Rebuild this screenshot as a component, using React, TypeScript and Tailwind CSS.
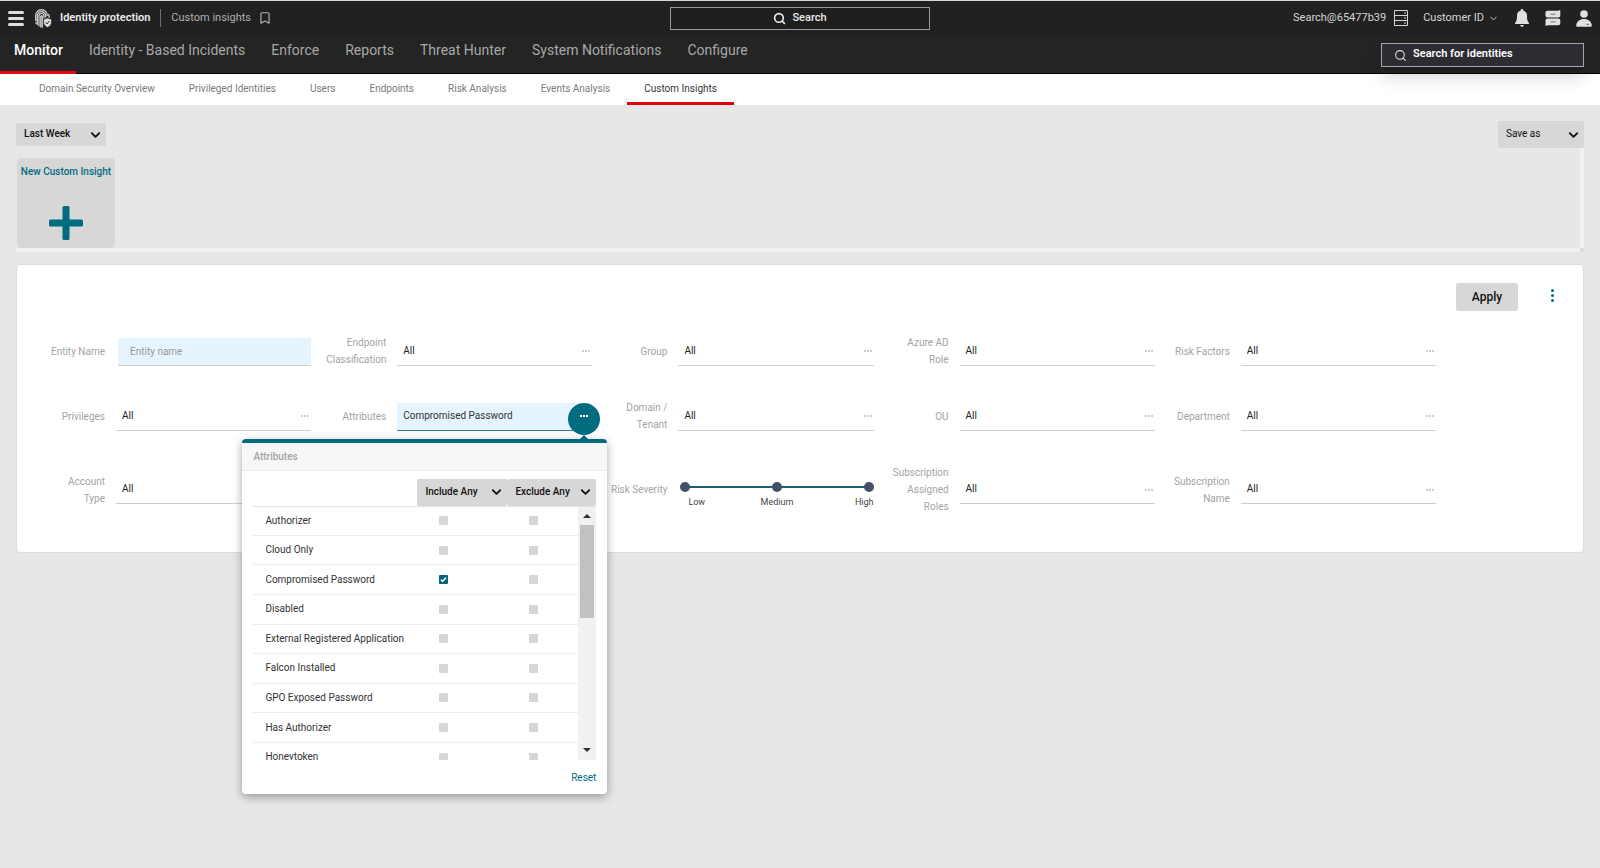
import { useState } from "react";
import type { ReactNode } from "react";
import { Bookmark, ChevronDown, Search } from "lucide-react";

const mainNav = [
  "Monitor",
  "Identity - Based Incidents",
  "Enforce",
  "Reports",
  "Threat Hunter",
  "System Notifications",
  "Configure",
];

const subNav = [
  "Domain Security Overview",
  "Privileged Identities",
  "Users",
  "Endpoints",
  "Risk Analysis",
  "Events Analysis",
  "Custom Insights",
];

const attributes = [
  "Authorizer",
  "Cloud Only",
  "Compromised Password",
  "Disabled",
  "External Registered Application",
  "Falcon Installed",
  "GPO Exposed Password",
  "Has Authorizer",
  "Honeytoken",
];

function FingerprintLogo() {
  return (
    <svg width="17" height="19" viewBox="0 0 17 19" fill="none" stroke="#dcdcdc" strokeWidth="1.2" strokeLinecap="round">
      <path d="M.7 11.500V6.500a5.800 5.800 0 0 1 11.600 0M2.300 15.500V6.800a4.200 4.200 0 0 1 8.400 0V8" />
      <path d="M4 17V7a2.500 2.500 0 0 1 5 0v2M5.800 18V7.300a.8.8 0 0 1 1.500 0v10.900M1 13.500v1" />
      <path d="M13.600 5.500c.5 1 .6 2 .6 3" />
      <path d="M12.500 8.800c1.300.8 2.500 1.200 4.100 1.200v3c0 2.600-1.600 4.500-4.100 5.500-2.500-1-4.100-2.900-4.100-5.500v-3c1.600 0 2.800-.4 4.100-1.200z" fill="#dcdcdc" stroke="#212121" strokeWidth="0.800" />
      <path d="m10.800 13.700 1.200 1.300 2.200-2.700" stroke="#333" strokeWidth="1" />
    </svg>
  );
}

function ServerIcon() {
  return (
    <svg width="14" height="16" viewBox="0 0 14 16" fill="none" stroke="#d6d6d6">
      <path d="M.5.5h13v15H.5zM.5 5.500h13M.5 10.500h13" />
      <path d="M10 3h2M10 8h2M10 13h2" />
    </svg>
  );
}

function BellIcon() {
  return (
    <svg width="14" height="18" viewBox="0 0 14 18" fill="#e0e0e0">
      <path d="M7 0c.8 0 1.300.5 1.300 1.300v.5c2.300.5 3.700 2.200 3.700 4.500 0 4 .3 6 1.800 7.400.4.400.2 1.300-.4 1.300H.6c-.6 0-.8-.9-.4-1.300C1.700 12.300 2 10.300 2 6.300c0-2.300 1.400-4 3.700-4.500v-.5C5.700.5 6.200 0 7 0zM5.200 16h3.600c0 1.100-.8 1.800-1.800 1.800S5.200 17.100 5.200 16z" />
    </svg>
  );
}

function MessagesIcon() {
  return (
    <svg width="16" height="16" viewBox="0 0 16 16">
      <path d="M2.500.800H13L15.300 0v5.500c0 1.100-.9 2-2 2H2.500c-1.100 0-2-.9-2-2V2.800c0-1.100.9-2 2-2z" fill="#e0e0e0" />
      <path d="M2.500 8.500h10.800c1.100 0 2 .9 2 2v2.700c0 1.100-.9 2-2 2H3L.5 16v-5.500c0-1.100.9-2 2-2z" fill="#e0e0e0" />
      <path d="M5.500 4.200h5M5.500 11.800h5" stroke="#777" strokeWidth="1" />
    </svg>
  );
}

function UserIcon() {
  return (
    <svg width="16" height="17" viewBox="0 0 16 17" fill="#e0e0e0">
      <circle cx="8" cy="4" r="3.800" />
      <path d="M8 9c4.300 0 7.200 2.400 7.800 6.200.1.900-.4 1.500-1.300 1.500h-13c-.9 0-1.400-.6-1.300-1.500C.8 11.400 3.700 9 8 9z" />
      <path d="M10.500 14.300h2.500" stroke="#555" />
    </svg>
  );
}

function Dots({ className }: { className: string }) {
  return (
    <svg width="8" height="2" viewBox="0 0 8 2" fill="currentColor" className={className}>
      <path d="M0 0h2v2H0zM3 0h2v2H3zM6 0h2v2H6z" />
    </svg>
  );
}

function Dropdown({ label, value, className }: { label: string; value: string; className: string }) {
  return (
    <div className="relative">
      <select
        aria-label={label}
        className={`block appearance-none rounded-xs bg-[#d7d7d7] pb-[2px] pl-2 text-[10px] text-[#111] outline-none ${className}`}
      >
        <option>{value}</option>
      </select>
      <ChevronDown size={15} strokeWidth={3} className="pointer-events-none absolute right-[3px] top-1/2 -translate-y-1/2 text-[#111]" />
    </div>
  );
}

function Cell({ label, htmlFor, children }: { label: string; htmlFor: string; children: ReactNode }) {
  return (
    <div className="flex min-w-0 items-center">
      <div className="flex w-[86px] flex-none justify-end pb-px pr-[11px]">
        <label htmlFor={htmlFor} className="w-[60px] text-right text-[10px] leading-[17px] text-[#a3a3a3]">
          {label}
        </label>
      </div>
      <div className="min-w-0 flex-1">{children}</div>
    </div>
  );
}

function PickerField({ label }: { label: string }) {
  const id = label.toLowerCase().replace(/[^a-z]+/g, "-");
  return (
    <Cell label={label} htmlFor={id}>
      <button
        id={id}
        className="flex h-7 w-full items-center justify-between border-b border-[#cfcfcf] pl-[6px] pr-[2px] text-[10px] text-[#222]"
      >
        <span className="pb-[2px]">All</span>
        <Dots className="text-[#cdcdcd]" />
      </button>
    </Cell>
  );
}

function Check({ label, checked, onChange }: { label: string; checked: boolean; onChange: () => void }) {
  return (
    <span className="relative block size-[9px]">
      <input
        type="checkbox"
        aria-label={label}
        checked={checked}
        onChange={onChange}
        className="block size-[9px] appearance-none rounded-[1px] bg-[#d6d6d6] checked:bg-[#006679]"
      />
      {checked && (
        <svg viewBox="0 0 9 9" fill="none" stroke="white" strokeWidth="1.500" className="pointer-events-none absolute inset-0">
          <path d="m2 4.700 1.700 1.600L7 2.700" />
        </svg>
      )}
    </span>
  );
}

function AttributesPopup() {
  const [included, setIncluded] = useState<string[]>(["Compromised Password"]);
  const [excluded, setExcluded] = useState<string[]>([]);

  const toggle = (list: string[], name: string) =>
    list.includes(name) ? list.filter((n) => n !== name) : [...list, name];

  return (
    <div className="absolute -right-[15px] top-9 z-20 w-[365px] rounded border-t-4 border-[#006c80] bg-white shadow-[0_3px_10px_rgba(0,0,0,0.35)]">
      <h2 className="flex h-7 items-center border-b border-[#ebebeb] bg-[#f7f7f7] pl-[11px] text-[10px] font-medium text-[#a3a3a3]">
        Attributes
      </h2>
      <div className="px-[11px] pt-2">
        <div className="flex justify-end border-b border-[#e3e3e3]">
          <Dropdown label="Include mode" value="Include Any" className="h-[27px] w-[90px] font-medium" />
          <Dropdown label="Exclude mode" value="Exclude Any" className="h-[27px] w-[89px] font-medium" />
        </div>
        <div className="flex h-[253px] overflow-hidden">
          <div className="flex-1">
            <table className="h-[266px] w-full table-fixed text-[10px] text-[#333]">
              <tbody>
                {attributes.map((name) => (
                  <tr key={name} className="border-b border-[#ececec]">
                    <td className="pb-px pl-3">{name}</td>
                    <td className="w-[90px]">
                      <Check
                        label={`Include ${name}`}
                        checked={included.includes(name)}
                        onChange={() => setIncluded(toggle(included, name))}
                      />
                    </td>
                    <td className="w-[49px]">
                      <Check
                        label={`Exclude ${name}`}
                        checked={excluded.includes(name)}
                        onChange={() => setExcluded(toggle(excluded, name))}
                      />
                    </td>
                  </tr>
                ))}
              </tbody>
            </table>
          </div>
          {/* list scrollbar */}
          <div className="flex w-[18px] flex-none flex-col items-center justify-between bg-[#f1f1f1] pb-2">
            <div className="flex flex-col items-center">
              <svg width="8" height="4" viewBox="0 0 8 4" fill="#333" className="my-[7px]">
                <path d="M4 0 8 4H0z" />
              </svg>
              <div className="h-[93px] w-[14px] bg-[#c1c1c1]" />
            </div>
            <svg width="8" height="4" viewBox="0 0 8 4" fill="#333">
              <path d="M4 4 0 0h8z" />
            </svg>
          </div>
        </div>
        <div className="flex h-[34px] items-center justify-end pt-[2px]">
          <button onClick={() => { setIncluded([]); setExcluded([]); }} className="text-[10px] text-[#006c80]">
            Reset
          </button>
        </div>
      </div>
    </div>
  );
}

function RiskSeverity() {
  const [low, setLow] = useState(0);
  const [high, setHigh] = useState(2);
  const range =
    "pointer-events-none absolute inset-x-0 top-0 h-[10px] w-full appearance-none bg-transparent outline-none [&::-webkit-slider-thumb]:pointer-events-auto [&::-webkit-slider-thumb]:size-[10px] [&::-webkit-slider-thumb]:appearance-none [&::-webkit-slider-thumb]:rounded-full [&::-webkit-slider-thumb]:bg-[#435068]";

  return (
    <div className="pl-[2px] pt-[9px]">
      <div className="relative flex h-[10px] items-center justify-center">
        <div className="absolute inset-x-1 h-[2px] bg-[#1d6076]" />
        <div className="relative size-[10px] rounded-full bg-[#435068]" />
        <input id="risk-severity" type="range" min={0} max={2} value={low} onChange={(e) => setLow(Math.min(+e.target.value, high))} className={range} />
        <input aria-label="Highest risk severity" type="range" min={0} max={2} value={high} onChange={(e) => setHigh(Math.max(+e.target.value, low))} className={range} />
      </div>
      <div className="mt-1 grid grid-cols-3 text-[9px] leading-3 text-[#444]">
        <span className="pl-2">Low</span>
        <span className="text-center">Medium</span>
        <span className="text-right">High</span>
      </div>
    </div>
  );
}

export default function App() {
  return (
    <div className="min-h-screen bg-[#e7e7e7] font-[Roboto,'Liberation_Sans',sans-serif]">
      <header className="relative z-10 border-t border-[#d3dad6]">
        <div className="grid h-[34px] grid-cols-[1fr_260px_1fr] items-center bg-[#212121] text-[11px] text-[#d6d6d6]">
          <div className="flex items-center pl-2">
            <button aria-label="Menu" className="flex w-4 flex-col gap-[3px]">
              <span className="h-[3px] rounded-xs bg-[#e0e0e0]" />
              <span className="h-[3px] rounded-xs bg-[#e0e0e0]" />
              <span className="h-[3px] rounded-xs bg-[#e0e0e0]" />
            </button>
            <div className="ml-[11px] flex items-center gap-2 font-semibold text-[#ececec]">
              <FingerprintLogo />
              Identity protection
            </div>
            <div className="mx-[10px] h-[18px] w-px bg-[#6f6f6f]" />
            <span className="text-[#b0b0b0]">Custom insights</span>
            <button aria-label="Bookmark" className="ml-[7px]">
              <Bookmark size={14} strokeWidth={2} className="text-[#b0b0b0]" />
            </button>
          </div>
          <button className="flex h-[23px] items-center justify-center gap-[6px] border border-[#9a9a9a] bg-[#1e1e1e] font-medium text-[#ececec]">
            <Search size={13} strokeWidth={3} />
            Search
          </button>
          <div className="flex items-center justify-end pr-2">
            <span className="whitespace-nowrap">Search@65477b39</span>
            <span className="ml-2"><ServerIcon /></span>
            <button className="ml-[15px] flex items-center gap-1 whitespace-nowrap">
              Customer ID
              <ChevronDown size={11} strokeWidth={2} />
            </button>
            <button aria-label="Notifications" className="ml-4"><BellIcon /></button>
            <button aria-label="Messages" className="ml-4"><MessagesIcon /></button>
            <button aria-label="Account" className="ml-[15px]"><UserIcon /></button>
          </div>
        </div>
        <div className="flex h-[39px] items-start justify-between border-b border-black bg-[#242424] pr-4">
          <nav className="flex h-full text-[14px]">
            {mainNav.map((item, i) => (
              <a
                key={item}
                href="#"
                className={`flex h-[39px] items-center border-b-[3px] px-[13px] pb-[5px] whitespace-nowrap first:pl-[14px] ${i === 0 ? "border-[#e50913] font-medium text-white" : "border-transparent text-[#a8a8a8]"}`}
              >
                {item}
              </a>
            ))}
          </nav>
          <div className="mt-2 flex h-6 w-[203px] items-center border border-[#a5a5ab] bg-[#2e2c33] pl-3 shadow-[0_8px_18px_rgba(0,0,0,0.2)]">
            <Search size={13} strokeWidth={2} className="flex-none text-[#e0e0e0]" />
            <input
              type="text"
              aria-label="Search for identities"
              placeholder="Search for identities"
              className="w-full bg-transparent pb-[2px] pl-[6px] text-[11px] font-semibold text-white outline-none placeholder:text-white"
            />
          </div>
        </div>
      </header>

      <nav className="flex h-[31px] bg-white pl-[22px] text-[10px]">
        {subNav.map((item) => (
          <a
            key={item}
            href="#"
            className={`flex items-center border-b-[3px] px-[17px] whitespace-nowrap ${item === "Custom Insights" ? "border-[#e00000] text-[#333]" : "border-transparent text-[#7a7a7a]"}`}
          >
            {item}
          </a>
        ))}
      </nav>

      <main className="px-4 pt-4">
        <div className="flex items-center justify-between">
          <Dropdown label="Time range" value="Last Week" className="h-[23px] w-[90px] font-medium" />
          <Dropdown label="Save as" value="Save as" className="h-[27px] w-[86px]" />
        </div>

        <div className="relative flex border-b-4 border-r-4 border-[#f0f0f0] pl-px pt-[10px]">
          <button className="flex h-[90px] w-[98px] flex-col items-center rounded bg-[#d7d7d7] pt-[6px] text-[10px] font-medium text-[#006c80]">
            <span className="whitespace-nowrap">New Custom Insight</span>
            <svg width="34" height="34" viewBox="0 0 34 34" fill="currentColor" className="mt-[27px]">
              <rect x="13.500" width="7" height="34" rx="1.500" />
              <rect y="13.500" width="34" height="7" rx="1.500" />
            </svg>
          </button>
          <span className="absolute -bottom-1 -right-1 size-1 bg-[#dcdcdc]" />
        </div>

        <section className="mt-3 rounded border border-[#dcdcdc] bg-white pb-9 pt-[18px]">
          <div className="flex items-center justify-end gap-[26px] pr-[22px]">
            <button className="h-7 w-[62px] rounded-xs bg-[#d7d7d7] text-[12px] font-medium text-[#111]">Apply</button>
            <button aria-label="More options" className="flex w-[17px] flex-col items-center gap-[2px] pb-[3px]">
              <span className="size-[3px] rounded-full bg-[#006c80]" />
              <span className="size-[3px] rounded-full bg-[#006c80]" />
              <span className="size-[3px] rounded-full bg-[#006c80]" />
            </button>
          </div>

          <div className="mt-[23px] grid grid-cols-5 gap-y-[30px] pl-[13px] pr-[147px]">
            <Cell label="Entity Name" htmlFor="entity-name">
              <div className="pl-[2px]">
                <input
                  id="entity-name"
                  type="text"
                  placeholder="Entity name"
                  className="block h-7 w-full border-b border-[#cfcfcf] bg-[#e5f4ff] pl-3 text-[10px] outline-none placeholder:text-[#9a9a9a]"
                />
              </div>
            </Cell>
            <PickerField label="Endpoint Classification" />
            <PickerField label="Group" />
            <PickerField label="Azure AD Role" />
            <PickerField label="Risk Factors" />

            <PickerField label="Privileges" />
            <Cell label="Attributes" htmlFor="attributes">
              <div className="relative">
                <button
                  id="attributes"
                  className="flex h-7 w-full items-center border-b border-[#2b7f8f] bg-[#e5f4ff] pb-[2px] pl-[6px] text-[10px] text-[#333]"
                >
                  Compromised Password
                </button>
                <button
                  aria-label="Choose attributes"
                  className="absolute -right-2 top-0 flex size-8 items-center justify-center rounded-full bg-[#006c80] pb-[5px] text-white"
                >
                  <Dots className="" />
                </button>
                <svg width="8" height="4" viewBox="0 0 8 4" fill="#006c80" className="absolute right-1 top-8">
                  <path d="M4 0 8 4H0z" />
                </svg>
                <AttributesPopup />
              </div>
            </Cell>
            <PickerField label="Domain / Tenant" />
            <PickerField label="OU" />
            <PickerField label="Department" />

            <PickerField label="Account Type" />
            <div />
            <Cell label="Risk Severity" htmlFor="risk-severity">
              <RiskSeverity />
            </Cell>
            <PickerField label="Subscription Assigned Roles" />
            <PickerField label="Subscription Name" />
          </div>
        </section>
      </main>
    </div>
  );
}
